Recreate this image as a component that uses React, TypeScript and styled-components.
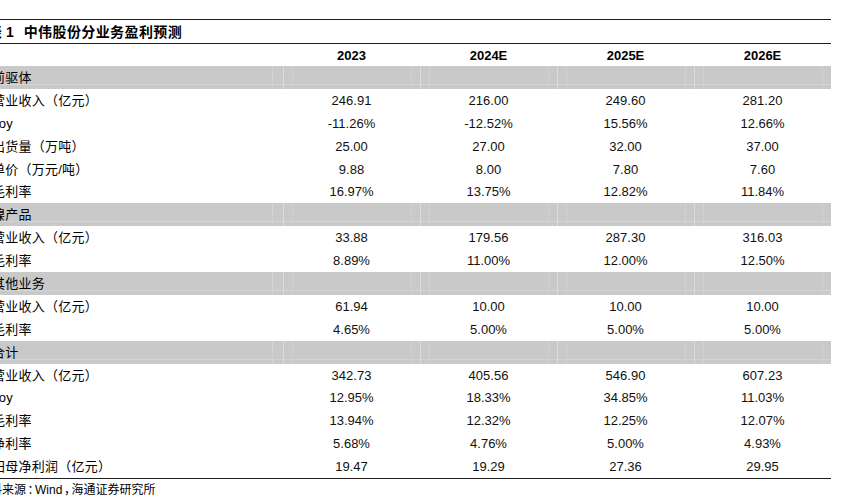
import styled, { createGlobalStyle } from "styled-components";

const GlobalStyle = createGlobalStyle`
  html, body {
    margin: 0;
    padding: 0;
    background: #fff;
  }
  body {
    width: 849px;
    height: 500px;
    overflow: hidden;
    font-family: "Liberation Sans", "Noto Sans CJK SC", sans-serif;
    color: #111;
  }
`;

type Line = { label: string; values: string[] };
type Group = { name: string; lines: Line[] };

const years = ["2023", "2024E", "2025E", "2026E"];

const groups: Group[] = [
  {
    name: "前驱体",
    lines: [
      { label: "营业收入（亿元）", values: ["246.91", "216.00", "249.60", "281.20"] },
      { label: "yoy", values: ["-11.26%", "-12.52%", "15.56%", "12.66%"] },
      { label: "出货量（万吨）", values: ["25.00", "27.00", "32.00", "37.00"] },
      { label: "单价（万元/吨）", values: ["9.88", "8.00", "7.80", "7.60"] },
      { label: "毛利率", values: ["16.97%", "13.75%", "12.82%", "11.84%"] },
    ],
  },
  {
    name: "镍产品",
    lines: [
      { label: "营业收入（亿元）", values: ["33.88", "179.56", "287.30", "316.03"] },
      { label: "毛利率", values: ["8.89%", "11.00%", "12.00%", "12.50%"] },
    ],
  },
  {
    name: "其他业务",
    lines: [
      { label: "营业收入（亿元）", values: ["61.94", "10.00", "10.00", "10.00"] },
      { label: "毛利率", values: ["4.65%", "5.00%", "5.00%", "5.00%"] },
    ],
  },
  {
    name: "合计",
    lines: [
      { label: "营业收入（亿元）", values: ["342.73", "405.56", "546.90", "607.23"] },
      { label: "yoy", values: ["12.95%", "18.33%", "34.85%", "11.03%"] },
      { label: "毛利率", values: ["13.94%", "12.32%", "12.25%", "12.07%"] },
      { label: "净利率", values: ["5.68%", "4.76%", "5.00%", "4.93%"] },
      { label: "归母净利润（亿元）", values: ["19.47", "19.29", "27.36", "29.95"] },
    ],
  },
];

const Page = styled.div`
  width: 849px;
  height: 500px;
  padding-top: 19px;
  box-sizing: border-box;
  overflow: hidden;
`;

// table starts off-screen on the left, like the cropped report page
const Table = styled.div`
  margin-left: -20px;
  width: 851px;
`;

const Title = styled.div`
  height: 23px;
  border-top: 1px solid #1e1e1e;
  border-bottom: 1px solid #1e1e1e;
  display: flex;
  align-items: center;
  padding-left: 8px;
  font-size: 14px;
  font-weight: 700;
  line-height: 1;
  color: #000;
`;

const TitleText = styled.span`
  margin-left: 10px;
  letter-spacing: 0.4px;
`;

const Row = styled.div<{ $h?: number }>`
  display: grid;
  grid-template-columns: 303px repeat(4, 137px);
  height: ${(p) => p.$h ?? 22.9}px;
  align-items: stretch;
`;

const GroupRow = styled(Row)`
  background:
    linear-gradient(
      to bottom,
      transparent calc(100% - 5px),
      #d5d5d5 calc(100% - 5px),
      #d5d5d5 calc(100% - 4px),
      transparent calc(100% - 4px)
    ),
    #c9c9c9;
`;

const Body = styled.div`
  border-bottom: 1px solid #1e1e1e;
`;

const Label = styled.div<{ $light?: boolean }>`
  display: flex;
  align-items: center;
  padding-left: 12px;
  font-size: 13px;
  line-height: 1;
  letter-spacing: 0.25px;
  white-space: nowrap;
  color: #000;
  background: ${(p) =>
    p.$light
      ? "linear-gradient(to left, transparent 10px, #d3d3d3 10px, #d3d3d3 11px, transparent 11px)"
      : "none"};
`;

const Cell = styled.div<{ $bold?: boolean; $light?: boolean }>`
  display: flex;
  align-items: center;
  justify-content: center;
  font-size: 13px;
  line-height: 1;
  font-weight: ${(p) => (p.$bold ? 700 : 400)};
  color: ${(p) => (p.$bold ? "#000" : "#111")};
  background: ${(p) =>
    p.$light
      ? `linear-gradient(to right, #dcdcdc 0, #dcdcdc 1px, transparent 1px, transparent 9px, #d2d2d2 9px, #d2d2d2 10px, transparent 10px),
         linear-gradient(to left, transparent 8px, #d2d2d2 8px, #d2d2d2 9px, transparent 9px)`
      : "none"};
`;

const Footer = styled.div`
  height: 22px;
  display: flex;
  align-items: center;
  margin-left: -2px;
  font-size: 12px;
  line-height: 1;
  white-space: pre;
  color: #000;
`;

const Punct = styled.span`
  font-feature-settings: "halt";
  margin: 0 1.5px;
`;

export default function App() {
  return (
    <Page>
      <GlobalStyle />
      <Table>
        <Title>
          <span>表 1</span>
          <TitleText>中伟股份分业务盈利预测</TitleText>
        </Title>
        <Row $h={22}>
          <Label />
          {years.map((y) => (
            <Cell key={y} $bold>
              {y}
            </Cell>
          ))}
        </Row>
        <Body>
          {groups.map((g) => (
            <div key={g.name}>
              <GroupRow>
                <Label $light>{g.name}</Label>
                {years.map((y) => (
                  <Cell key={y} $light />
                ))}
              </GroupRow>
              {g.lines.map((l) => (
                <Row key={g.name + l.label}>
                  <Label>{l.label}</Label>
                  {l.values.map((v, i) => (
                    <Cell key={i}>{v}</Cell>
                  ))}
                </Row>
              ))}
            </div>
          ))}
        </Body>
        <Footer>
          资料来源<Punct>：</Punct>Wind<Punct>，</Punct>海通证券研究所
        </Footer>
      </Table>
    </Page>
  );
}
